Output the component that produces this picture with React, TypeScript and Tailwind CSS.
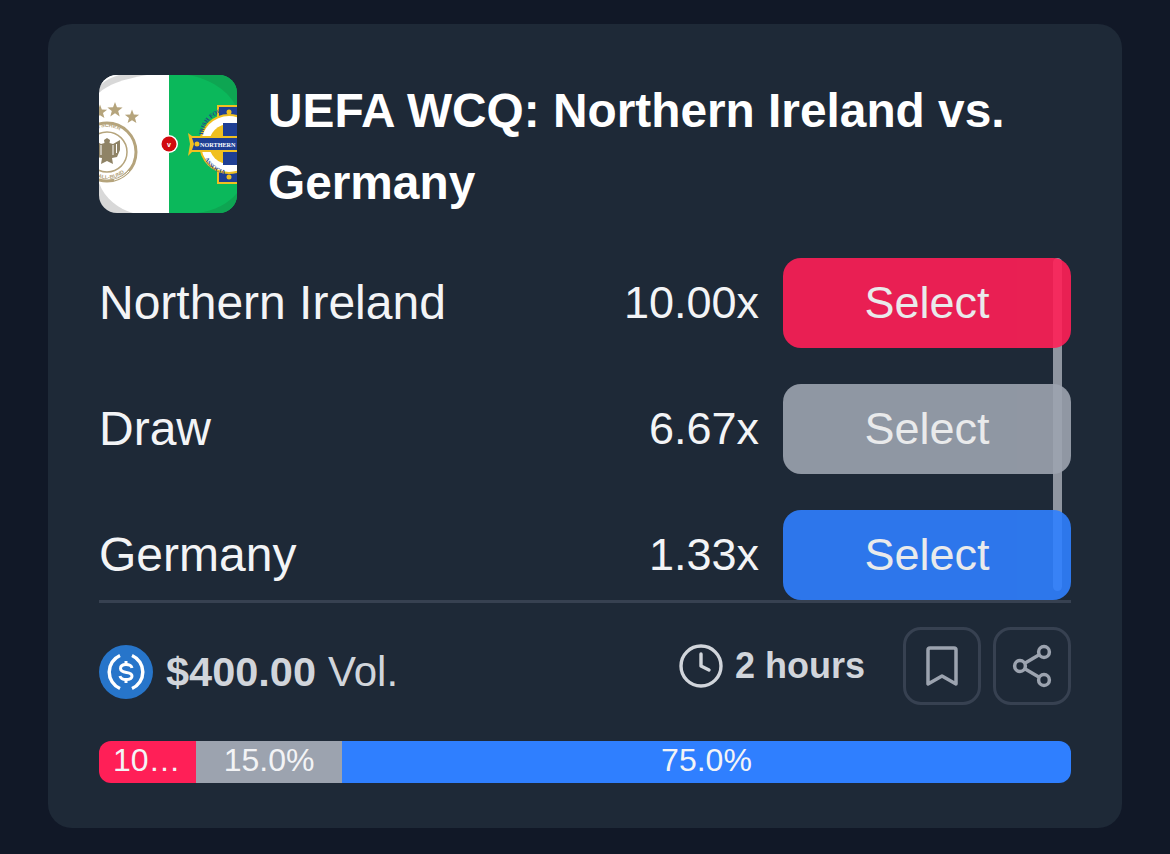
const FONT = "font-['Liberation_Sans',Arial,sans-serif]";

function Star({ cx, cy, r, fill }: { cx: number; cy: number; r: number; fill: string }) {
  const pts = Array.from({ length: 10 }, (_, i) => {
    const a = (Math.PI / 5) * i - Math.PI / 2;
    const d = i % 2 === 0 ? r : r * 0.42;
    return `${(cx + d * Math.cos(a)).toFixed(2)},${(cy + d * Math.sin(a)).toFixed(2)}`;
  });
  return <polygon points={pts.join(" ")} fill={fill} />;
}

function MatchLogo() {
  const gold = "#b5a47c";
  const navy = "#1f3f94";
  const yellow = "#f0c020";
  return (
    <svg viewBox="0 0 138 138" className="h-[138px] w-[138px] shrink-0 rounded-[18px]">
      <defs>
        <path id="dfbTop" d="M-17 77 A25 25 0 0 1 33 77" />
        <path id="dfbBottom" d="M-19 77 A27 27 0 0 0 35 77" />
        <path id="ifaTop" d="M104 60 A26 26 0 0 1 150 46" />
        <path id="ifaBottom" d="M104 80 A28 28 0 0 0 150 92" />
      </defs>

      {/* left half */}
      <rect width="70" height="138" fill="#d8d8d8" />
      <path d="M48 0 C24 4 8 10 0 18 L0 108 C6 124 20 134 34 138 L70 138 L70 0 Z" fill="#ffffff" />
      <path d="M0 0 H20 C10 3 4 7 0 12 Z" fill="#ffffff" />

      <Star cx={1} cy={37} r={7.5} fill={gold} />
      <Star cx={16} cy={35} r={8} fill={gold} />
      <Star cx={33} cy={42} r={7.5} fill={gold} />

      {/* DFB crest */}
      <circle cx="8" cy="77" r="29" fill="none" stroke={gold} strokeWidth="3" />
      <path d="M15 105 A29 29 0 0 0 30 96" fill="none" stroke="#ffffff" strokeWidth="1" />
      <circle cx="8" cy="77" r="20" fill="none" stroke={gold} strokeWidth="1.500" />
      <text fontSize="5.500" fontWeight="700" fill={gold} fontFamily="Liberation Sans">
        <textPath href="#dfbTop" startOffset="18">DEUTSCHER</textPath>
      </text>
      <text fontSize="5.500" fontWeight="700" fill={gold} fontFamily="Liberation Sans">
        <textPath href="#dfbBottom" startOffset="14">FUSSBALL-BUND</textPath>
      </text>
      <path
        d="M8 63 L11 65 L10.500 68 L14 69 L21 65 L21 75 L18 82 L13 83 L14 89 L8 86 L2 89 L3 83 L-2 82 L-5 75 L-5 65 L2 69 L5.500 68 L5 65 Z"
        fill="#8f8366"
      />
      <path d="M14 70 V80 M17.500 69 V78 M2 70 V80" stroke="#ffffff" strokeWidth="1" />

      {/* right half */}
      <rect x="70" width="68" height="138" fill="#0bb85b" />
      <path d="M89 0 C112 4 130 16 138 33 L138 0 Z" fill="#0ea552" />
      <path d="M98 138 C116 136 130 128 138 118 L138 138 Z" fill="#0ea552" />

      {/* IFA crest */}
      <rect x="118" y="30" width="22" height="13" fill={yellow} />
      <rect x="120" y="32" width="20" height="9" fill={navy} />
      <rect x="118" y="96" width="22" height="13" fill={yellow} />
      <rect x="120" y="98" width="20" height="9" fill={navy} />
      <circle cx="130" cy="37" r="2.500" fill={yellow} />
      <circle cx="130" cy="102" r="2.500" fill={yellow} />
      <circle cx="130" cy="69" r="30" fill={yellow} />
      <circle cx="130" cy="69" r="28" fill="#ffffff" />
      <circle cx="130" cy="69" r="20" fill={yellow} />
      <rect x="124" y="48" width="14" height="42" fill={navy} />
      <polygon points="89,58 93,61 138,61 138,77 93,77 89,81 91,69" fill={yellow} />
      <polygon points="93,63 138,63 138,75 93,75 95,69" fill={navy} />
      <circle cx="98" cy="69" r="2.500" fill={yellow} />
      <text x="101" y="71.500" fontSize="6.200" fontWeight="700" fill="#ffffff" fontFamily="Liberation Serif">NORTHERN I</text>
      <text fontSize="6" fontWeight="700" fill="#2a3f8c" fontFamily="Liberation Serif">
        <textPath href="#ifaTop">IRISH FOO</textPath>
      </text>
      <text fontSize="6" fontWeight="700" fill="#2a3f8c" fontFamily="Liberation Serif">
        <textPath href="#ifaBottom" startOffset="4">ASSOCIA</textPath>
      </text>

      {/* v badge */}
      <circle cx="70" cy="69" r="9" fill="#ffffff" />
      <circle cx="70" cy="69" r="7.500" fill="#d10a0f" />
      <text x="70" y="71.500" fontSize="7" fontWeight="700" fill="#ffffff" fontFamily="Liberation Sans" textAnchor="middle">v</text>
    </svg>
  );
}

function UsdcIcon() {
  return (
    <svg viewBox="0 0 54 54" className="h-[54px] w-[54px] shrink-0">
      <circle cx="27" cy="27" r="27" fill="#2775ca" />
      <path d="M21 10.500 A18 18 0 0 0 21 43.500" fill="none" stroke="#fff" strokeWidth="3.500" />
      <path d="M33 10.500 A18 18 0 0 1 33 43.500" fill="none" stroke="#fff" strokeWidth="3.500" />
      <path d="M33 23 C32.500 20.500 30.500 19.500 27 19.500 C23.500 19.500 21.500 21 21.500 23.500 C21.500 29.500 33 25.500 33 31 C33 33.500 30.500 34.500 27 34.500 C23.500 34.500 21.500 33.500 21 31" fill="none" stroke="#fff" strokeWidth="3" />
      <path d="M27 16 V19.500 M27 34.500 V38" stroke="#fff" strokeWidth="3" />
    </svg>
  );
}

const outcomes = [
  { name: "Northern Ireland", odds: "10.00x", btn: "bg-[#ff1f57]" },
  { name: "Draw", odds: "6.67x", btn: "bg-[#9ca3af]" },
  { name: "Germany", odds: "1.33x", btn: "bg-[#2f7fff]" },
];

export default function App() {
  return (
    <div className={`${FONT} min-h-[854px] bg-[#111827] px-12 py-6`}>
      <div className="rounded-[24px] bg-[#1e2937] px-[51px] pb-[45px] pt-[51px]">
        <div className="flex items-start gap-[31px]">
          <MatchLogo />
          <h1 className="text-[47.800px] font-bold leading-[72px] text-white">
            UEFA WCQ: Northern Ireland vs. Germany
          </h1>
        </div>

        <div className="relative mt-[39px] flex flex-col gap-9 border-b-[3px] border-[#374151]">
          {/* overlay scrollbar, the see-through buttons sit above it */}
          <div className="absolute right-[9px] top-0 h-[333px] w-[9px] rounded-[5px] bg-[#8f95a0]" />
          {outcomes.map((o) => (
            <div key={o.name} className="relative flex items-center">
              <span className="flex-1 text-[48px] leading-[72px] text-[#f3f4f6]">{o.name}</span>
              <span className="mr-6 text-[45px] leading-[72px] text-[#f3f4f6]">{o.odds}</span>
              <button className={`h-[90px] w-72 rounded-[18px] text-[45px] text-white opacity-90 ${o.btn}`}>Select</button>
            </div>
          ))}
        </div>

        <div className="mt-6 flex items-start">
          <div className="mt-[18px] flex items-center leading-[54px]">
            <UsdcIcon />
            <span className="ml-[13px] text-[41.500px] font-bold text-[#d1d5db]">$400.00</span>
            <span className="ml-[12px] text-[42px] text-[#d1d5db]">Vol.</span>
          </div>
          <div className="ml-auto flex items-center">
            <svg viewBox="0 0 24 24" fill="none" stroke="#d1d5db" strokeWidth="1.700" strokeLinecap="round" strokeLinejoin="round" className="h-[48px] w-[48px]">
              <circle cx="12" cy="12" r="10" />
              <path d="M12 6v6l4 2" />
            </svg>
            <span className="ml-[10px] mr-[38px] text-[36px] font-bold text-[#d1d5db]">2 hours</span>
            <button className="flex h-[78px] w-[78px] items-center justify-center rounded-[18px] border-[3px] border-[#374151]">
              <svg viewBox="0 0 24 24" fill="none" stroke="#9ca3af" strokeWidth="1.750" strokeLinejoin="round" className="h-[48px] w-[48px]">
                <path d="M6 3h12a1 1 0 0 1 1 1v17l-7-4-7 4V4a1 1 0 0 1 1-1z" />
              </svg>
            </button>
            <button className="ml-3 flex h-[78px] w-[78px] items-center justify-center rounded-[18px] border-[3px] border-[#374151]">
              <svg viewBox="0 0 24 24" fill="none" stroke="#9ca3af" strokeWidth="1.750" className="h-[48px] w-[48px]">
                <circle cx="18" cy="5" r="2.700" />
                <circle cx="6" cy="12" r="2.700" />
                <circle cx="18" cy="19" r="2.700" />
                <path d="M8.400 13.400l7.200 4.200M15.600 6.400l-7.200 4.200" />
              </svg>
            </button>
          </div>
        </div>

        <div className="mt-9 flex h-[42px] overflow-hidden rounded-xl text-center text-[32px] leading-[38px] text-[#f3f4f6]">
          <div className="w-[10%] truncate bg-[#ff1f57] pl-[14px] pr-3">10.0%</div>
          <div className="w-[15%] truncate bg-[#9ca3af] px-3">15.0%</div>
          <div className="w-[75%] truncate bg-[#2f7fff] px-3">75.0%</div>
        </div>
      </div>
    </div>
  );
}
